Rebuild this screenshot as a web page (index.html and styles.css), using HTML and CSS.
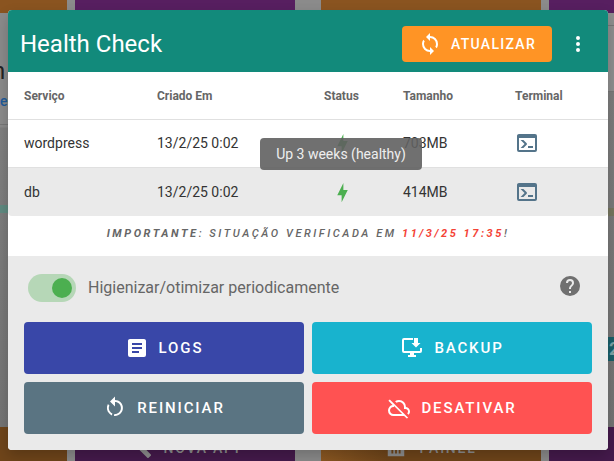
FILE: index.html
```html
<!DOCTYPE html>
<html lang="pt">
<head>
<meta charset="utf-8">
<title>Health Check</title>
<link rel="stylesheet" href="styles.css">
</head>
<body>
<div class="page">
  <div class="backdrop">
    <div class="card-row top-row">
      <div class="bg-card brown"></div>
      <div class="bg-card purple"></div>
      <div class="bg-card brown"></div>
      <div class="bg-card purple"></div>
    </div>
    <div class="mid">
      <div class="mid-left">
        <span class="bg-n">n</span>
        <span class="bg-e">e</span>
        <span class="bg-line left"></span>
        <span class="bg-band"></span>
      </div>
      <div class="mid-right">
        <span class="bg-line"></span>
        <span class="bg-line second"></span>
        <span class="bg-olive"></span>
        <span class="bg-teal">2</span>
      </div>
    </div>
    <div class="card-row bottom-row">
      <div class="bg-card brown"></div>
      <div class="bg-card purple">
        <svg class="bg-icon" viewBox="0 0 24 24"><path d="M22.7 19L13.6 9.9C14.5 7.6 14 4.9 12.1 3C10.1 1 7.1.6 4.7 1.7L9 6L6 9L1.6 4.7C.4 7.1.9 10.1 2.9 12.1C4.8 14 7.5 14.5 9.8 13.6L18.9 22.7C19.3 23.1 19.9 23.1 20.3 22.7L22.6 20.4C23.1 20 23.1 19.3 22.7 19Z"/></svg>
        <span>NOVA API</span>
      </div>
      <div class="bg-card brown">
        <svg class="bg-icon" viewBox="0 0 24 24"><path d="M3 3H21V21H3ZM7 10V18H9V10ZM11 10V18H13V10ZM15 10V18H17V10Z"/></svg>
        <span>PAINEL</span>
      </div>
      <div class="bg-card purple"></div>
    </div>
  </div>

  <section class="modal">
    <header class="modal-head">
      <h1 class="modal-title">Health Check</h1>
      <button class="btn btn-update" type="button">
        <svg class="icon" viewBox="0 0 24 24"><path d="M12,18A6,6 0 0,1 6,12C6,11 6.25,10.03 6.7,9.2L5.24,7.74C4.46,8.97 4,10.43 4,12A8,8 0 0,0 12,20V23L16,19L12,15M12,4V1L8,5L12,9V6A6,6 0 0,1 18,12C18,13 17.75,13.97 17.3,14.8L18.76,16.26C19.54,15.03 20,13.57 20,12A8,8 0 0,0 12,4Z"/></svg>
        <span>Atualizar</span>
      </button>
      <svg class="icon menu-dots" viewBox="0 0 24 24"><path d="M12,16A2,2 0 0,1 14,18A2,2 0 0,1 12,20A2,2 0 0,1 10,18A2,2 0 0,1 12,16M12,10A2,2 0 0,1 14,12A2,2 0 0,1 12,14A2,2 0 0,1 10,12A2,2 0 0,1 12,10M12,4A2,2 0 0,1 14,6A2,2 0 0,1 12,8A2,2 0 0,1 10,6A2,2 0 0,1 12,4Z"/></svg>
    </header>

    <table class="services">
      <colgroup>
        <col class="c-name"><col class="c-date"><col class="c-status"><col class="c-size"><col class="c-term">
      </colgroup>
      <thead>
        <tr><th>Serviço</th><th>Criado Em</th><th>Status</th><th>Tamanho</th><th>Terminal</th></tr>
      </thead>
      <tbody>
        <tr>
          <td>wordpress</td><td>13/2/25 0:02</td>
          <td><svg class="bolt" viewBox="0 0 24 24"><path d="M11 15H6L13 1V9H18L11 23V15Z"/></svg></td>
          <td>703MB</td>
          <td><svg class="icon console" viewBox="0 0 24 24"><path d="M20,19V7H4V19H20M20,3A2,2 0 0,1 22,5V19A2,2 0 0,1 20,21H4A2,2 0 0,1 2,19V5C2,3.89 2.9,3 4,3H20M13,17V15H18V17H13M9.58,13L5.57,9H8.4L11.7,12.3C12.09,12.69 12.09,13.33 11.7,13.72L8.42,17H5.59L9.58,13Z"/></svg></td>
        </tr>
        <tr class="alt">
          <td>db</td><td>13/2/25 0:02</td>
          <td><svg class="bolt" viewBox="0 0 24 24"><path d="M11 15H6L13 1V9H18L11 23V15Z"/></svg></td>
          <td>414MB</td>
          <td><svg class="icon console" viewBox="0 0 24 24"><path d="M20,19V7H4V19H20M20,3A2,2 0 0,1 22,5V19A2,2 0 0,1 20,21H4A2,2 0 0,1 2,19V5C2,3.89 2.9,3 4,3H20M13,17V15H18V17H13M9.58,13L5.57,9H8.4L11.7,12.3C12.09,12.69 12.09,13.33 11.7,13.72L8.42,17H5.59L9.58,13Z"/></svg></td>
        </tr>
      </tbody>
    </table>

    <p class="notice"><strong>IMPORTANTE</strong>: SITUAÇÃO VERIFICADA EM <strong class="stamp">11/3/25 17:35</strong>!</p>

    <footer class="modal-foot">
      <div class="option">
        <span class="switch"><span class="thumb"></span></span>
        <span class="option-label">Higienizar/otimizar periodicamente</span>
        <svg class="icon help" viewBox="0 0 24 24"><path d="M15.07,11.25L14.17,12.17C13.45,12.89 13,13.5 13,15H11V14.5C11,13.39 11.45,12.39 12.17,11.67L13.41,10.41C13.78,10.05 14,9.55 14,9C14,7.89 13.1,7 12,7A2,2 0 0,0 10,9H8A4,4 0 0,1 12,5A4,4 0 0,1 16,9C16,9.88 15.64,10.67 15.07,11.25M13,19H11V17H13M12,2A10,10 0 0,0 2,12A10,10 0 0,0 12,22A10,10 0 0,0 22,12C22,6.47 17.5,2 12,2Z"/></svg>
      </div>
      <div class="actions">
        <button class="btn action logs" type="button">
          <svg class="icon" viewBox="0 0 24 24"><path d="M14,17H7V15H14M17,13H7V11H17M17,9H7V7H17M19,3H5C3.89,3 3,3.89 3,5V19A2,2 0 0,0 5,21H19A2,2 0 0,0 21,19V5C21,3.89 20.1,3 19,3Z"/></svg>
          <span>Logs</span>
        </button>
        <button class="btn action backup" type="button">
          <svg class="icon" viewBox="0 0 24 24"><path d="M4 2H13V4H4V15H20V12H22V15A2 2 0 0 1 20 17H14V19H16V21H8V19H10V17H4A2 2 0 0 1 2 15V4A2 2 0 0 1 4 2ZM14 2H18V7H20.5L16 11.5 11.5 7H14Z"/></svg>
          <span>Backup</span>
        </button>
        <button class="btn action restart" type="button">
          <svg class="icon" viewBox="0 0 24 24"><path d="M12,4C14.1,4 16.1,4.8 17.6,6.3C20.7,9.4 20.7,14.5 17.6,17.6C15.8,19.5 13.3,20.2 10.9,19.9L11.4,17.9C13.1,18.1 14.9,17.5 16.2,16.2C18.5,13.9 18.5,10.1 16.2,7.7C15.1,6.6 13.5,6 12,6V10.6L7,5.6L12,0.6V4M6.3,17.6C3.7,15 3.2,11 4.9,7.9L6.4,9.4C5.3,11.6 5.7,14.4 7.6,16.2C8.1,16.7 8.7,17.1 9.4,17.4L8.8,19.4C7.8,19 7,18.4 6.3,17.6Z"/></svg>
          <span>Reiniciar</span>
        </button>
        <button class="btn action disable" type="button">
          <svg class="icon" viewBox="0 0 24 24"><path d="M19.8 22.6L17.15 20H6.5Q4.2 20 2.6 18.4T1 14.5Q1 12.45 2.3 10.9 3.6 9.35 5.6 9.05L1.4 4.8L2.8 3.4L21.2 21.8M6.5 18H15.15L7.1 9.95Q7.05 10.2 7 10.5T7 11H6.5Q5.05 11 4.03 12.03 3 13.05 3 14.5T4 16.97 6.5 18M21.6 18.75L20.15 17.35Q20.55 17 20.78 16.54 21 16.05 21 15.5 21 14.45 20.28 13.72 19.55 13 18.5 13H17V11Q17 8.93 15.54 7.46 14.08 6 12 6 11.33 6 10.7 6.16 10.08 6.32 9.5 6.68L8.05 5.23Q8.93 4.63 9.92 4.31 10.92 4 12 4 14.93 4 16.96 6.04 19 8.07 19 11 20.73 11.2 21.86 12.5 23 13.78 23 15.5 23 16.5 22.6 17.33 22.2 18.15 21.6 18.75Z"/></svg>
          <span>Desativar</span>
        </button>
      </div>
    </footer>

    <div class="tooltip">Up 3 weeks (healthy)</div>
  </section>
</div>
</body>
</html>
```

FILE: styles.css
```css
* { box-sizing: border-box; }

html, body {
  margin: 0;
  height: 100%;
  overflow: hidden;
}

body {
  font-family: Roboto, "Liberation Sans", sans-serif;
}

.page {
  position: relative;
  width: 614px;
  height: 461px;
  overflow: hidden;
}

/* Dimmed page behind the dialog */
.backdrop {
  display: flex;
  flex-direction: column;
  height: 100%;
  background: #8b8b8b;
}

.card-row {
  display: flex;
  gap: 8px;
  margin-left: -153px;
}

.top-row { height: 13px; }
.bottom-row { height: 34px; }

.card-row .bg-card:nth-child(2) { margin-right: 18px; }

.bg-card {
  flex: 0 0 220px;
  display: flex;
  align-items: flex-start;
  justify-content: center;
  gap: 12px;
  padding-top: 13px;
  color: #8d8d8d;
  font-size: 14px;
  line-height: 16px;
  letter-spacing: 1.75px;
  font-weight: 500;
}

.brown { background: #8a5420; }
.purple { background: #571f60; }
.bottom-row .brown { background: linear-gradient(90deg, #8c5822, #6f451a 30%); }
.bottom-row .purple { background: #451a4c; }

.bg-icon {
  width: 22px;
  height: 22px;
  margin-top: -3px;
  fill: #8d8d8d;
}

.mid {
  flex: 1;
  display: flex;
  justify-content: space-between;
}

.mid-left {
  width: 8px;
  display: flex;
  flex-direction: column;
  align-items: stretch;
  overflow: hidden;
  padding-top: 44px;
  background: linear-gradient(180deg, #8b8b8b 0, #8b8b8b 114px, #7f7f7f 115px, #747474 100%);
}

.bg-n {
  font-size: 24px;
  line-height: 28px;
  margin-left: -8px;
  color: #222;
}

.bg-e {
  font-size: 14px;
  line-height: 18px;
  margin-top: 7px;
  color: #1d5a9a;
  font-weight: 500;
}

.bg-line {
  flex: 0 0 1px;
  margin-top: 12px;
  background: #777;
}

.bg-line.left { margin-top: 14px; }

.bg-band {
  flex: 0 0 8px;
  margin-top: 80px;
  background: #5f8a80;
}

.mid-right {
  width: 6px;
  display: flex;
  flex-direction: column;
  overflow: hidden;
  background: linear-gradient(180deg, #8f8f8f 0, #8f8f8f 78px, #7d7d7d 79px, #747474 100%);
}

.bg-line.second { margin-top: 65px; }

.bg-olive {
  flex: 0 0 8px;
  margin-top: 116px;
  background: #77775f;
}

.bg-teal {
  flex: 0 0 24px;
  margin-top: 121px;
  padding-left: 1px;
  background: #1a5f69;
  color: #7fa5a8;
  font-size: 18px;
  font-weight: 700;
  line-height: 24px;
}

/* Dialog */
.modal {
  position: absolute;
  left: 8px;
  top: 10px;
  width: 600px;
  height: 440px;
  display: flex;
  flex-direction: column;
  border-radius: 4px;
  overflow: hidden;
  background: #fff;
  box-shadow: 0 6px 14px rgba(0, 0, 0, .2);
}

.modal-head {
  flex: 0 0 62px;
  display: flex;
  align-items: center;
  padding: 6px 18px 0 12px;
  background: #128a7b;
}

.modal-title {
  flex: 1;
  margin: 0;
  color: #fff;
  font-size: 24px;
  font-weight: 400;
  line-height: 32px;
}

.icon {
  display: block;
  width: 24px;
  height: 24px;
  fill: currentColor;
}

.btn {
  display: flex;
  align-items: center;
  justify-content: center;
  gap: 9px;
  border: 0;
  border-radius: 4px;
  color: #fff;
  font-family: inherit;
  font-size: 14px;
  font-weight: 500;
  letter-spacing: 1.3px;
  text-transform: uppercase;
}

.btn-update {
  width: 150px;
  height: 36px;
  background: #ff9425;
}

.action {
  gap: 10px;
  font-size: 15px;
  letter-spacing: 1.875px;
}

.menu-dots {
  margin-left: 14px;
  color: #fff;
}

/* Table */
.services {
  width: 600px;
  border-collapse: separate;
  border-spacing: 0;
  table-layout: fixed;
  font-size: 14px;
  color: #333;
}

.c-name { width: 133px; }
.c-date { width: 167px; }
.c-status { width: 79px; }
.c-size { width: 112px; }
.c-term { width: 109px; }

.services th {
  height: 48px;
  padding: 0 0 0 16px;
  border-bottom: 1px solid #e0e0e0;
  color: #666;
  font-size: 12px;
  font-weight: 700;
  text-align: left;
}

.services td {
  height: 48px;
  padding: 0 0 1px 16px;
  border-bottom: 1px solid #e0e0e0;
}

.services .alt td {
  padding-bottom: 0;
  background: #eaeaea;
  border-bottom: 0;
}

.services .alt td:first-child { border-bottom-left-radius: 4px; }
.services .alt td:last-child { border-bottom-right-radius: 4px; }

.bolt {
  display: block;
  width: 21px;
  height: 21px;
  margin-left: 7.5px;
  fill: #4caf50;
}

.console { color: #54748a; }

/* Notice */
.notice {
  flex: 0 0 40px;
  margin: 0;
  padding-top: 11px;
  color: #666;
  font-size: 11px;
  font-style: italic;
  font-weight: 500;
  line-height: 14px;
  letter-spacing: 2.55px;
  text-align: center;
}

.notice strong { font-weight: 700; }

.stamp { color: #f44336; }

/* Footer */
.modal-foot {
  flex: 1;
  padding: 18px 16px 16px;
  background: #eaeaea;
}

.option {
  display: flex;
  align-items: center;
  height: 28px;
  padding: 0 10px 0 4px;
}

.switch {
  position: relative;
  flex: 0 0 48px;
  height: 28px;
  border-radius: 14px;
  background: #b6d7b7;
}

.thumb {
  position: absolute;
  left: 24px;
  top: 4px;
  width: 20px;
  height: 20px;
  border-radius: 50%;
  background: #4caf50;
}

.option-label {
  flex: 1;
  margin-left: 12px;
  padding-bottom: 2px;
  color: #666;
  font-size: 16px;
}

.help {
  color: #707070;
  margin-top: -4px;
}

.actions {
  display: grid;
  grid-template-columns: 280px 280px;
  grid-auto-rows: 52px;
  gap: 8px;
  margin-top: 20px;
}

.logs { background: #3947a8; }
.backup { background: #18b3ce; }
.restart { background: #5a7482; }
.disable { background: #ff5252; }

/* Tooltip */
.tooltip {
  position: absolute;
  left: 252px;
  top: 128px;
  width: 162px;
  height: 32px;
  border-radius: 4px;
  background: rgba(97, 97, 97, .9);
  color: #eee;
  font-size: 14px;
  line-height: 32px;
  text-align: center;
}
```
